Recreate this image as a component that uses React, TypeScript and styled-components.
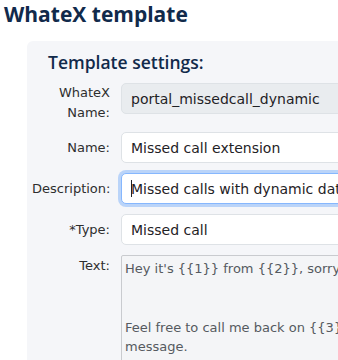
import styled, { createGlobalStyle } from 'styled-components';

const GlobalStyle = createGlobalStyle`
	html, body {
		margin: 0;
		padding: 0;
		background: #ffffff;
		overflow: hidden;
	}
`;

const Page = styled.div`
	width: 338px;
	height: 360px;
	overflow: hidden;
	padding: 0 0 0 4px;
	box-sizing: border-box;
`;

const PageTitle = styled.h1`
	margin: 0;
	padding-top: 1px;
	font-family: 'Open Sans', 'Liberation Sans', sans-serif;
	font-weight: 700;
	font-size: 21px;
	line-height: 26px;
	color: #112a4b;
	white-space: nowrap;
`;

const Card = styled.section`
	margin: 14px 0 0 23px;
	width: 420px;
	background: #f5f6f9;
	border-radius: 6px;
	padding: 9px 0 20px 5px;
`;

const CardTitle = styled.h2`
	margin: 0 0 9px 16px;
	font-family: 'Open Sans', 'Liberation Sans', sans-serif;
	font-weight: 600;
	font-size: 17.5px;
	line-height: 24px;
	color: #112a4b;
	white-space: nowrap;
`;

const Form = styled.div`
	display: grid;
	grid-template-columns: 78px minmax(0, 1fr);
	column-gap: 11px;
	row-gap: 10px;
	font-family: 'DejaVu Sans', Verdana, sans-serif;
`;

const Label = styled.label<{ $top?: boolean }>`
	align-self: ${({ $top }) => ($top ? 'start' : 'center')};
	padding-top: ${({ $top }) => ($top ? '1px' : '0')};
	text-align: right;
	font-size: 13px;
	line-height: 19.5px;
	color: #2e2e2e;
`;

const Field = styled.div<{ $readonly?: boolean; $focused?: boolean }>`
	align-self: start;
	box-sizing: border-box;
	height: 31px;
	display: flex;
	align-items: center;
	padding: 0 9px;
	font-size: 14px;
	color: #1f2226;
	white-space: nowrap;
	overflow: hidden;
	border-radius: 5px;
	border: 1px solid ${({ $focused }) => ($focused ? '#86b7fe' : '#dee2e6')};
	background: ${({ $readonly }) => ($readonly ? '#e9ecef' : '#ffffff')};
	box-shadow: ${({ $focused }) => ($focused ? '0 0 0 3px rgba(13, 110, 253, 0.25)' : 'none')};
`;

const Caret = styled.span`
	display: inline-block;
	width: 1px;
	height: 17px;
	background: #1f2226;
	margin-right: -1px;
`;

const TextArea = styled.div`
	box-sizing: border-box;
	height: 140px;
	padding: 3px 3px;
	border: 1px solid #c9cbcf;
	border-radius: 2px;
	background: #f4f5f7;
	font-size: 13px;
	line-height: 19.5px;
	color: #555a60;
	overflow: hidden;
`;

const TextLine = styled.div`
	white-space: pre;
	min-height: 19.5px;
`;

const messageLines = [
	"Hey it's {{1}} from {{2}}, sorry I missed your call!",
	'',
	'',
	'Feel free to call me back on {{3}} or reply to this',
	'message.',
];

const App = () => {
	return (
		<>
			<GlobalStyle />
			<Page>
				<PageTitle>WhateX template</PageTitle>
				<Card>
					<CardTitle>Template settings:</CardTitle>
					<Form>
						<Label>WhateX Name:</Label>
						<Field $readonly>portal_missedcall_dynamic</Field>

						<Label>Name:</Label>
						<Field>Missed call extension</Field>

						<Label>Description:</Label>
						<Field $focused>
							<Caret />
							Missed calls with dynamic data
						</Field>

						<Label>*Type:</Label>
						<Field>Missed call</Field>

						<Label $top>Text:</Label>
						<TextArea>
							{messageLines.map((line, i) => (
								<TextLine key={i}>{line}</TextLine>
							))}
						</TextArea>
					</Form>
				</Card>
			</Page>
		</>
	);
};

export default App;
